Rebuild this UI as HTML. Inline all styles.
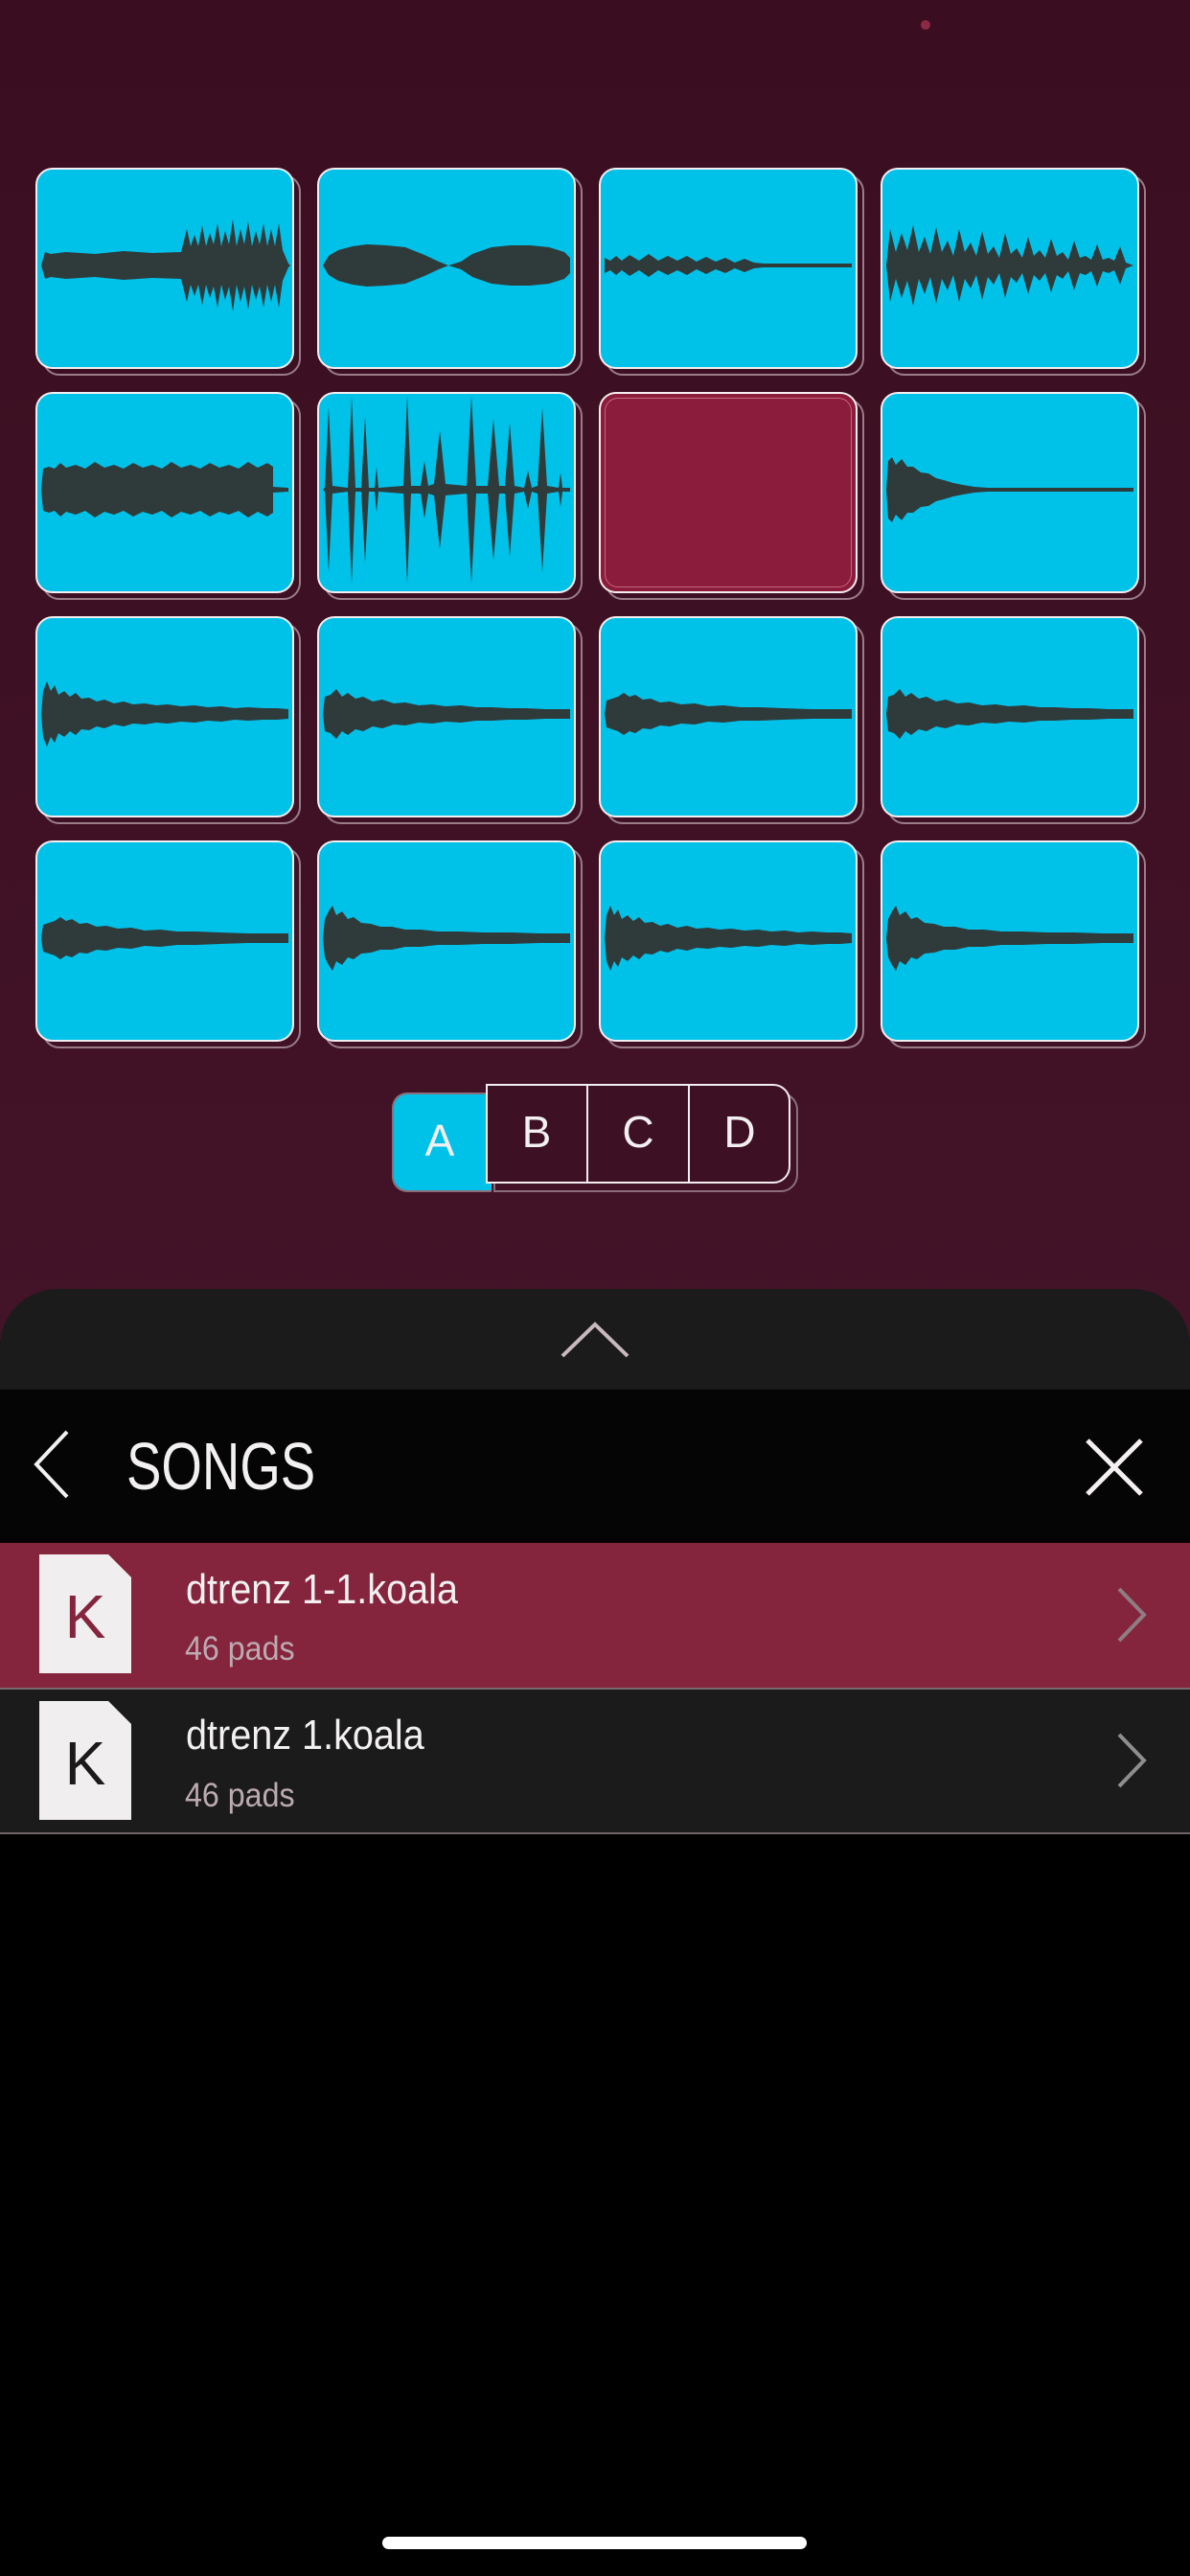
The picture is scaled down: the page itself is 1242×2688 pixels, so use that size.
<!DOCTYPE html>
<html><head><meta charset="utf-8">
<style>
html,body{margin:0;padding:0}
body{width:1242px;height:2688px;position:relative;overflow:hidden;background:#000;font-family:"Liberation Sans",sans-serif}
#top{position:absolute;left:0;top:0;width:1242px;height:1400px;background:linear-gradient(#3a0e20,#431328)}
.pad{position:absolute;width:266px;height:206px;border:2px solid #f4eef0;border-radius:18px;background:#00c2e9;overflow:hidden}
.sh{position:absolute;width:266px;height:206px;border:2px solid #9a7d88;border-radius:18px}
.pad svg{position:absolute;left:0;top:0;width:266px;height:206px}
.red{background:#8b1c3b}
.red:after{content:"";position:absolute;left:4px;top:4px;right:4px;bottom:4px;border:1px solid #c4667e;border-radius:14px}
#panel{position:absolute;left:0;top:1345px;width:1242px;height:110px;background:#1b1b1b;border-radius:60px 60px 0 0}
.t{position:absolute;color:#f2f0f1;white-space:nowrap}
</style></head><body>
<div id="top"></div>
<svg width="0" height="0" style="position:absolute">
<defs>
<path id="w1" d="M4,100 L8,86 L14,88 L30,86 L60,88 L90,85 L120,87 L150,86 L152,78 L156,62 L160,80 L164,68 L168,80 L172,58 L176,80 L180,66 L184,78 L188,56 L192,80 L196,64 L200,78 L204,52 L208,80 L212,62 L216,78 L220,54 L224,80 L228,64 L232,78 L236,56 L240,80 L244,62 L248,80 L252,56 L256,84 L262,98 L264,100 Z"/>
<path id="w2" d="M4,100 L10,90 L20,84 L35,80 L50,78 L70,79 L90,81 L110,89 L125,96 L135,100 L148,96 L160,88 L180,81 L200,79 L220,79 L240,81 L256,86 L262,92 L262,100 Z"/>
<path id="w3" d="M4,100 L4,92 L10,95 L16,90 L22,95 L30,89 L40,95 L50,88 L60,95 L70,90 L80,95 L90,90 L100,96 L110,91 L120,96 L130,92 L140,97 L150,93 L160,97 L170,98 L262,98 L262,100 Z"/>
<path id="w4" d="M4,100 L8,62 L14,86 L20,66 L26,84 L32,58 L38,86 L44,70 L50,88 L56,60 L62,86 L68,74 L74,90 L80,62 L86,86 L92,76 L98,90 L104,64 L110,88 L116,80 L122,92 L128,66 L134,88 L140,82 L146,92 L152,70 L158,90 L164,84 L170,92 L176,72 L182,90 L188,86 L194,94 L200,74 L206,92 L212,90 L218,94 L224,78 L230,94 L236,92 L242,95 L248,80 L254,97 L262,100 Z"/>
<path id="w5" d="M4,100 L6,78 L12,76 L18,78 L24,72 L30,77 L40,74 L50,78 L60,71 L70,77 L80,74 L90,78 L100,72 L110,77 L120,74 L130,78 L140,71 L150,77 L160,74 L170,78 L180,72 L190,77 L200,74 L210,78 L220,71 L230,77 L240,72 L246,76 L246,97 L262,98 L262,100 Z"/>
<path id="w6" d="M4,100 L6,98 L10,14 L14,96 L30,98 L34,2 L38,98 L44,98 L48,24 L52,98 L58,98 L60,76 L62,98 L88,96 L92,2 L96,96 L106,96 L110,70 L114,96 L120,94 L126,38 L132,94 L154,96 L159,2 L164,96 L176,96 L182,26 L188,96 L194,96 L199,30 L204,96 L214,98 L218,80 L222,98 L228,96 L233,14 L238,96 L250,98 L252,82 L254,98 L262,98 L262,100 Z"/>
<path id="w8" d="M4,100 L6,70 L10,66 L14,74 L20,68 L26,76 L32,76 L40,82 L48,83 L56,88 L64,90 L74,93 L84,95 L96,97 L110,98 L262,98 L262,100 Z"/>
<path id="d1" d="M4,100 L6,76 L10,66 L14,76 L18,70 L22,80 L28,76 L34,82 L40,78 L46,84 L54,83 L62,87 L70,85 L80,89 L90,87 L100,90 L112,89 L124,91 L136,90 L150,92 L164,91 L178,93 L192,92 L206,94 L220,93 L236,94 L250,94 L262,95 L262,100 Z"/>
<path id="d2" d="M4,100 L6,82 L12,80 L18,74 L24,82 L30,78 L38,84 L46,82 L56,87 L66,85 L78,89 L90,88 L104,91 L118,90 L132,92 L148,91 L164,93 L180,93 L198,94 L216,94 L236,95 L262,95 L262,100 Z"/>
<path id="d3" d="M4,100 L6,86 L12,84 L18,82 L24,78 L30,82 L36,80 L44,85 L52,84 L62,88 L72,87 L84,90 L98,89 L112,92 L128,91 L146,93 L166,93 L190,94 L220,95 L262,95 L262,100 Z"/>
<path id="d4" d="M4,100 L6,80 L10,72 L14,66 L18,76 L24,72 L30,80 L36,78 L44,84 L54,85 L64,88 L76,88 L90,91 L106,91 L124,93 L146,93 L172,94 L200,94 L230,95 L262,95 L262,100 Z"/>
</defs></svg>

<div style="position:absolute;left:961px;top:21px;width:10px;height:10px;border-radius:50%;background:#8c2a44"></div>

<div class="sh" style="left:44px;top:182px"></div><div class="sh" style="left:338px;top:182px"></div><div class="sh" style="left:632px;top:182px"></div><div class="sh" style="left:926px;top:182px"></div>
<div class="sh" style="left:44px;top:416px"></div><div class="sh" style="left:338px;top:416px"></div><div class="sh" style="left:632px;top:416px"></div><div class="sh" style="left:926px;top:416px"></div>
<div class="sh" style="left:44px;top:650px"></div><div class="sh" style="left:338px;top:650px"></div><div class="sh" style="left:632px;top:650px"></div><div class="sh" style="left:926px;top:650px"></div>
<div class="sh" style="left:44px;top:884px"></div><div class="sh" style="left:338px;top:884px"></div><div class="sh" style="left:632px;top:884px"></div><div class="sh" style="left:926px;top:884px"></div>

<div class="pad" style="left:37px;top:175px"><svg viewBox="0 0 266 206"><g fill="#2f3a3b"><use href="#w1"/><use href="#w1" transform="matrix(1 0 0 -1 0 200)"/></g></svg></div>
<div class="pad" style="left:331px;top:175px"><svg viewBox="0 0 266 206"><g fill="#2f3a3b"><use href="#w2"/><use href="#w2" transform="matrix(1 0 0 -1 0 200)"/></g></svg></div>
<div class="pad" style="left:625px;top:175px"><svg viewBox="0 0 266 206"><g fill="#2f3a3b"><use href="#w3"/><use href="#w3" transform="matrix(1 0 0 -1 0 200)"/></g></svg></div>
<div class="pad" style="left:919px;top:175px"><svg viewBox="0 0 266 206"><g fill="#2f3a3b"><use href="#w4"/><use href="#w4" transform="matrix(1 0 0 -1 0 200)"/></g></svg></div>
<div class="pad" style="left:37px;top:409px"><svg viewBox="0 0 266 206"><g fill="#2f3a3b"><use href="#w5"/><use href="#w5" transform="matrix(1 0 0 -1 0 200)"/></g></svg></div>
<div class="pad" style="left:331px;top:409px"><svg viewBox="0 0 266 206"><g fill="#2f3a3b"><use href="#w6"/><use href="#w6" transform="matrix(1 0 0 -1 0 200)"/></g></svg></div>
<div class="pad red" style="left:625px;top:409px"></div>
<div class="pad" style="left:919px;top:409px"><svg viewBox="0 0 266 206"><g fill="#2f3a3b"><use href="#w8"/><use href="#w8" transform="matrix(1 0 0 -1 0 200)"/></g></svg></div>
<div class="pad" style="left:37px;top:643px"><svg viewBox="0 0 266 206"><g fill="#2f3a3b"><use href="#d1"/><use href="#d1" transform="matrix(1 0 0 -1 0 200)"/></g></svg></div>
<div class="pad" style="left:331px;top:643px"><svg viewBox="0 0 266 206"><g fill="#2f3a3b"><use href="#d2"/><use href="#d2" transform="matrix(1 0 0 -1 0 200)"/></g></svg></div>
<div class="pad" style="left:625px;top:643px"><svg viewBox="0 0 266 206"><g fill="#2f3a3b"><use href="#d3"/><use href="#d3" transform="matrix(1 0 0 -1 0 200)"/></g></svg></div>
<div class="pad" style="left:919px;top:643px"><svg viewBox="0 0 266 206"><g fill="#2f3a3b"><use href="#d2"/><use href="#d2" transform="matrix(1 0 0 -1 0 200)"/></g></svg></div>
<div class="pad" style="left:37px;top:877px"><svg viewBox="0 0 266 206"><g fill="#2f3a3b"><use href="#d3"/><use href="#d3" transform="matrix(1 0 0 -1 0 200)"/></g></svg></div>
<div class="pad" style="left:331px;top:877px"><svg viewBox="0 0 266 206"><g fill="#2f3a3b"><use href="#d4"/><use href="#d4" transform="matrix(1 0 0 -1 0 200)"/></g></svg></div>
<div class="pad" style="left:625px;top:877px"><svg viewBox="0 0 266 206"><g fill="#2f3a3b"><use href="#d1"/><use href="#d1" transform="matrix(1 0 0 -1 0 200)"/></g></svg></div>
<div class="pad" style="left:919px;top:877px"><svg viewBox="0 0 266 206"><g fill="#2f3a3b"><use href="#d4"/><use href="#d4" transform="matrix(1 0 0 -1 0 200)"/></g></svg></div>

<div style="position:absolute;left:515px;top:1140px;width:318px;height:104px;border:2px solid #8a6f7a;border-radius:0 18px 18px 0;box-sizing:border-box"></div>
<div style="position:absolute;left:409px;top:1140px;width:104px;height:104px;background:#00c2e9;border:2px solid #8a6f7a;border-right:none;border-radius:16px 0 0 16px;box-sizing:border-box"></div>
<div class="t" style="left:409px;top:1163px;width:100px;text-align:center;font-size:46px">A</div>
<div style="position:absolute;left:507px;top:1131px;width:318px;height:104px;border:2px solid #f4eef0;border-radius:0 18px 18px 0;background:#3e1024;box-sizing:border-box"></div>
<div style="position:absolute;left:612px;top:1131px;width:2px;height:104px;background:#f4eef0"></div>
<div style="position:absolute;left:718px;top:1131px;width:2px;height:104px;background:#f4eef0"></div>
<div class="t" style="left:507px;top:1154px;width:106px;text-align:center;font-size:46px">B</div>
<div class="t" style="left:613px;top:1154px;width:106px;text-align:center;font-size:46px">C</div>
<div class="t" style="left:719px;top:1154px;width:106px;text-align:center;font-size:46px">D</div>

<div id="panel"></div>
<svg style="position:absolute;left:580px;top:1372px" width="82" height="52"><polyline points="7,43 41,10 75,43" fill="none" stroke="#c9b9be" stroke-width="4"/></svg>

<div style="position:absolute;left:0;top:1450px;width:1242px;height:160px;background:#050505"></div>
<svg style="position:absolute;left:30px;top:1490px" width="50" height="76"><polyline points="40,4 8,38 40,72" fill="none" stroke="#f2f0f1" stroke-width="4"/></svg>
<div class="t" style="left:132px;top:1490px;font-size:70px;transform:scaleX(0.78);transform-origin:0 0">SONGS</div>
<svg style="position:absolute;left:1130px;top:1498px" width="66" height="66"><path d="M5,5 L61,61 M61,5 L5,61" stroke="#f4f0f2" stroke-width="5"/></svg>

<div style="position:absolute;left:0;top:1610px;width:1242px;height:151px;background:#85243d"></div>
<div style="position:absolute;left:0;top:1761px;width:1242px;height:2px;background:#7a6b71"></div>
<div style="position:absolute;left:0;top:1763px;width:1242px;height:149px;background:#1b1b1b"></div>
<div style="position:absolute;left:0;top:1912px;width:1242px;height:2px;background:#6f6569"></div>

<svg style="position:absolute;left:41px;top:1622px" width="96" height="124"><path d="M0,0 H72 L96,24 V124 H0 Z" fill="#f0eeef"/><path d="M72,0 V24 H96 Z" fill="#85243d"/><path d="M72,0 L96,24 H72Z" fill="#f0eeef"/></svg>
<div class="t" style="left:41px;top:1650px;width:96px;text-align:center;font-size:64px;color:#85243d">K</div>
<svg style="position:absolute;left:41px;top:1775px" width="96" height="124"><path d="M0,0 H72 L96,24 V124 H0 Z" fill="#f0eeef"/><path d="M72,0 V24 H96 Z" fill="#1b1b1b"/><path d="M72,0 L96,24 H72Z" fill="#f0eeef"/></svg>
<div class="t" style="left:41px;top:1803px;width:96px;text-align:center;font-size:64px;color:#1a1a1a">K</div>

<div class="t" style="left:194px;top:1634px;font-size:44px;transform:scaleX(0.9);transform-origin:0 0">dtrenz 1-1.koala</div>
<div class="t" style="left:193px;top:1701px;font-size:35px;color:#bcaab1;transform:scaleX(0.92);transform-origin:0 0">46 pads</div>
<div class="t" style="left:194px;top:1786px;font-size:44px;transform:scaleX(0.9);transform-origin:0 0">dtrenz 1.koala</div>
<div class="t" style="left:193px;top:1854px;font-size:35px;color:#bcaab1;transform:scaleX(0.92);transform-origin:0 0">46 pads</div>

<svg style="position:absolute;left:1160px;top:1654px" width="40" height="62"><polyline points="8,4 34,31 8,58" fill="none" stroke="#8e7e84" stroke-width="4"/></svg>
<svg style="position:absolute;left:1160px;top:1806px" width="40" height="62"><polyline points="8,4 34,31 8,58" fill="none" stroke="#8e8e8e" stroke-width="4"/></svg>

<div style="position:absolute;left:399px;top:2647px;width:443px;height:13px;border-radius:7px;background:#fff"></div>
</body></html>
